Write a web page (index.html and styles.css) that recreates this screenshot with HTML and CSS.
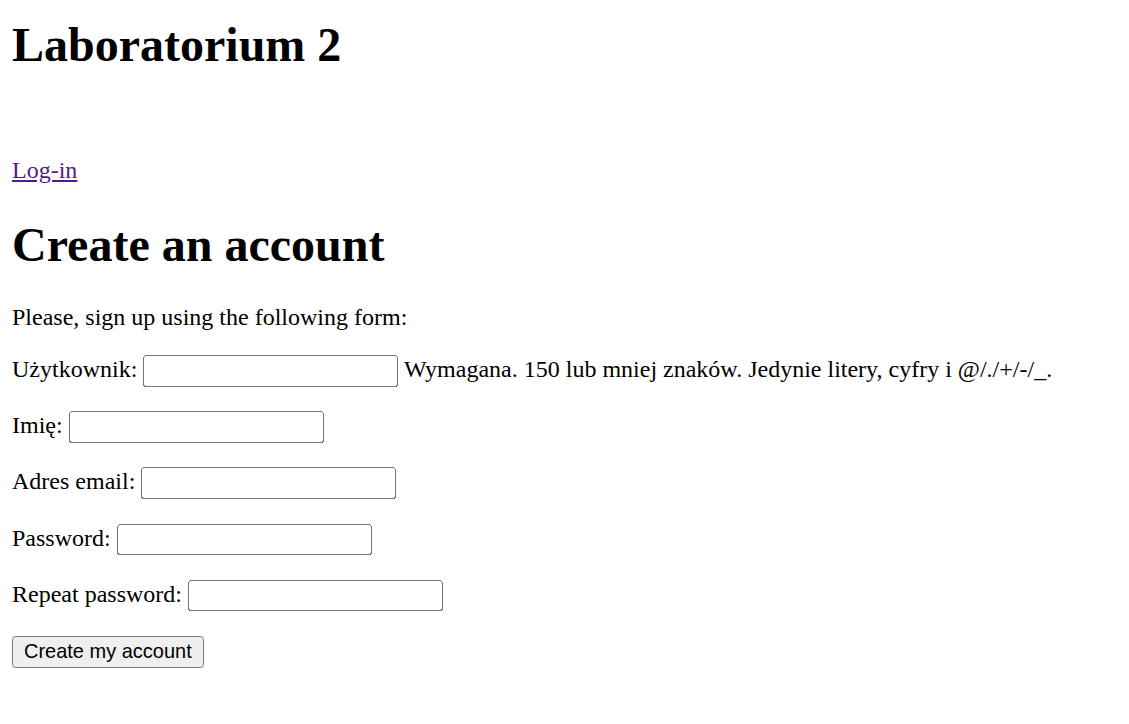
FILE: index.html
```html
<!DOCTYPE html>
<html lang="pl">
<head>
<meta charset="utf-8">
<title>Laboratorium 2</title>
<link rel="stylesheet" href="styles.css">
</head>
<body>
<h1 class="title">Laboratorium 2</h1>
<div class="nav">
<p><a href="#">Log-in</a></p>
</div>
<h1>Create an account</h1>
<p class="intro">Please, sign up using the following form:</p>
<form class="signup">
<p><label for="u">Użytkownik:</label> <input type="text" id="u"> <span class="help">Wymagana. 150 lub mniej znaków. Jedynie litery, cyfry i @/./+/-/_.</span></p>
<p><label for="n">Imię:</label> <input type="text" id="n"></p>
<p><label for="e">Adres email:</label> <input type="email" id="e"></p>
<p><label for="p1">Password:</label> <input type="password" id="p1"></p>
<p><label for="p2">Repeat password:</label> <input type="password" id="p2"></p>
<p><input type="submit" value="Create my account"></p>
</form>
</body>
</html>
```
FILE: styles.css
```css
html {
  zoom: 1.5;
}
body {
  margin: 8px;
  font-family: "Liberation Serif", "Times New Roman", serif;
  font-size: 16px;
  color: #000;
  background: #fff;
}
.title {
  margin-top: 3.5px;
}
.nav {
  padding-top: 19.3px;
}
a {
  color: #551a8b;
}
.intro {
  margin-top: 17px;
}
.signup p {
  margin: 16.4px 0;
}
input[type="text"], input[type="email"], input[type="password"] {
  font-family: "Liberation Sans", Arial, sans-serif;
  font-size: 13.33px;
  box-sizing: border-box;
  width: 170px;
  height: 21px;
}
input[type="submit"] {
  font-family: "Liberation Sans", Arial, sans-serif;
  font-size: 13.33px;
}
```
